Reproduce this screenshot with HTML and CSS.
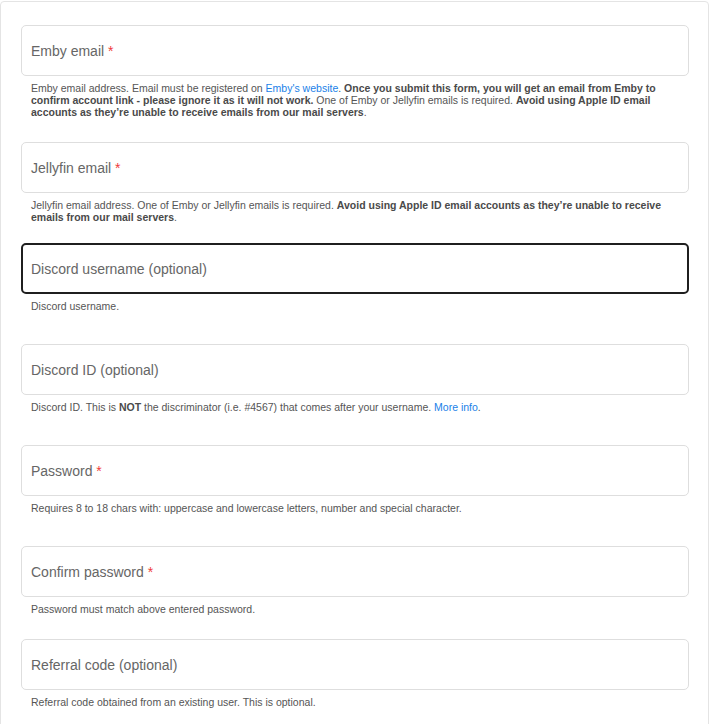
FILE: index.html
```html
<!DOCTYPE html>
<html lang="en">
<head>
<meta charset="utf-8">
<title>Register</title>
<link rel="stylesheet" href="styles.css">
</head>
<body>
<form class="card">
  <div class="field field--f1">
    <div class="input"><span class="label">Emby email <span class="req">*</span></span></div>
    <p class="help">Emby email address. Email must be registered on <a href="#">Emby's website</a>. <b>Once you submit this form, you will get an email from Emby to confirm account link - please ignore it as it will not work.</b> One of Emby or Jellyfin emails is required. <b>Avoid using Apple ID email accounts as they’re unable to receive emails from our mail servers</b>.</p>
  </div>
  <div class="field field--f2">
    <div class="input"><span class="label">Jellyfin email <span class="req">*</span></span></div>
    <p class="help">Jellyfin email address. One of Emby or Jellyfin emails is required. <b>Avoid using Apple ID email accounts as they’re unable to receive emails from our mail servers</b>.</p>
  </div>
  <div class="field field--wide">
    <div class="input input--focused"><span class="label">Discord username (optional)</span></div>
    <p class="help">Discord username.</p>
  </div>
  <div class="field field--wide">
    <div class="input"><span class="label">Discord ID (optional)</span></div>
    <p class="help">Discord ID. This is <b>NOT</b> the discriminator (i.e. #4567) that comes after your username. <a href="#">More info</a>.</p>
  </div>
  <div class="field field--wide">
    <div class="input"><span class="label">Password <span class="req">*</span></span></div>
    <p class="help">Requires 8 to 18 chars with: uppercase and lowercase letters, number and special character.</p>
  </div>
  <div class="field field--f6">
    <div class="input"><span class="label">Confirm password <span class="req">*</span></span></div>
    <p class="help">Password must match above entered password.</p>
  </div>
  <div class="field">
    <div class="input"><span class="label">Referral code (optional)</span></div>
    <p class="help">Referral code obtained from an existing user. This is optional.</p>
  </div>
</form>
</body>
</html>
```
FILE: styles.css
```css
html, body {
  margin: 0;
  padding: 0;
  background: #ffffff;
  font-family: "Liberation Sans", Arial, sans-serif;
}

.card {
  box-sizing: border-box;
  width: 709px;
  margin-top: 1px;
  min-height: 760px;
  border: 1px solid #e4e4e4;
  border-radius: 4px;
  padding: 23px 19px 0 20px;
}

.field {
  margin-bottom: 24px;
}
.field--f1 { margin-bottom: 24px; }
.field--f2 { margin-bottom: 20px; }
.field--wide { margin-bottom: 32px; }
.field--f6 { margin-bottom: 24px; }

.input {
  box-sizing: border-box;
  height: 51px;
  border: 1px solid #dedede;
  border-radius: 5px;
  padding: 0 10px 0 9px;
  display: flex;
  align-items: center;
  background: #fff;
}

.input--focused {
  border: 2px solid #1f1f1f;
  padding-left: 8px;
}

.label {
  font-size: 14px;
  color: #666666;
}

.req {
  color: #ef3b3b;
}

.help {
  margin: 6px 0 0 0;
  padding: 0 10px;
  font-size: 10.5px;
  line-height: 12px;
  color: #555555;
}

.help b {
  color: #4a4a4a;
}

.help a {
  color: #1a7fe8;
  text-decoration: none;
}
```
